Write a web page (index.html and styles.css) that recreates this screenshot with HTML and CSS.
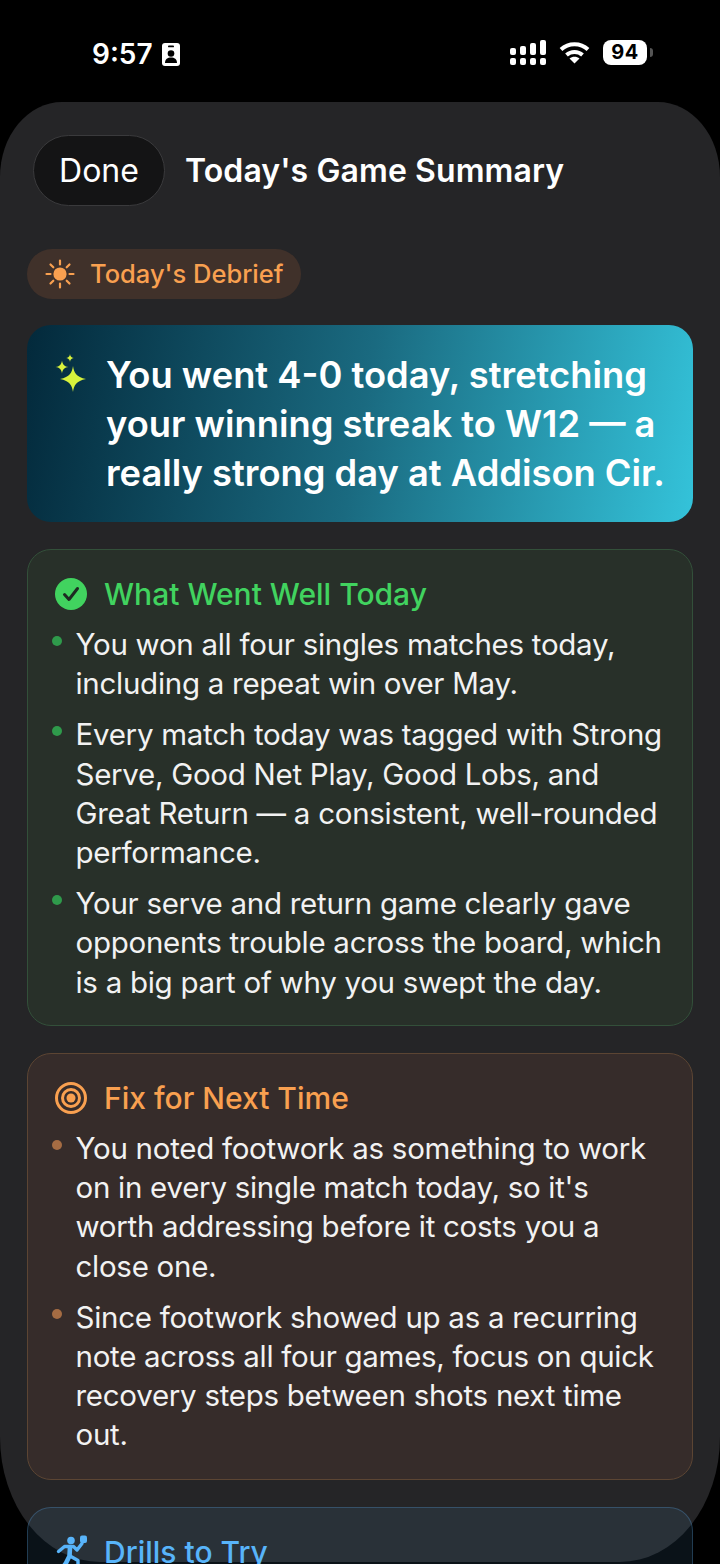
FILE: index.html
```html
<!DOCTYPE html>
<html lang="en">
<head>
    <meta charset="UTF-8">
    <meta name="viewport" content="width=device-width, initial-scale=1.0">
    <title>Today's Game Summary</title>
    <link rel="stylesheet" href="styles.css">
</head>
<body>
    <div class="status-bar">
        <div class="status-left">
            <span class="clock">9:57</span>
            <svg width="18" height="23" viewBox="0 0 18 23">
                <rect x="0" y="0" width="18" height="23" rx="3" fill="#fff"/>
                <rect x="6" y="2.500" width="6" height="1.800" rx="0.900" fill="#000"/>
                <circle cx="9" cy="10.500" r="3.300" fill="#000"/>
                <path d="M3 20c0-4 2.600-5.600 6-5.600s6 1.600 6 5.600z" fill="#000"/>
            </svg>
        </div>
        <div class="status-right">
            <svg width="36" height="25" viewBox="0 0 36 25" fill="#fff">
                <rect x="0" y="8" width="6" height="7" rx="2"/>
                <rect x="10" y="6" width="6" height="9" rx="2"/>
                <rect x="20" y="3" width="6" height="12" rx="2"/>
                <rect x="30" y="0" width="6" height="15" rx="2"/>
                <rect x="0" y="18" width="6" height="7" rx="2"/>
                <rect x="10" y="18" width="6" height="7" rx="2"/>
                <rect x="20" y="18" width="6" height="7" rx="2"/>
                <rect x="30" y="18" width="6" height="7" rx="2"/>
            </svg>
            <svg width="31" height="23" viewBox="0 0 31 23" fill="none" stroke="#fff" stroke-width="4">
                <path d="M2 8.500c7.500-7 19.500-7 27 0"/>
                <path d="M7.500 14c4.500-4 11.500-4 16 0"/>
                <path d="M15.500 22.500l-5-5c2.800-2.400 7.200-2.400 10 0z" fill="#fff" stroke="none"/>
            </svg>
            <div class="battery">
                <span class="battery-body">94</span>
                <span class="battery-cap"></span>
            </div>
        </div>
    </div>

    <div class="sheet">
        <div class="sheet-head">
            <div class="done-btn">Done</div>
            <h1>Today's Game Summary</h1>
        </div>

        <div class="debrief-pill">
            <svg width="32" height="32" viewBox="0 0 32 32" fill="#f9a050" stroke="#f9a050" stroke-width="2.200" stroke-linecap="round">
                <circle cx="16" cy="16" r="6.600" stroke="none"/>
                <path d="M16 2.500v4M16 25.500v4M2.500 16h4M25.500 16h4M6.500 6.500l2.800 2.800M22.700 22.700l2.800 2.800M6.500 25.500l2.800-2.800M22.700 9.300l2.800-2.800"/>
            </svg>
            <span>Today's Debrief</span>
        </div>

        <div class="hero-card">
            <svg class="sparkles" width="32" height="40" viewBox="0 0 32 40" fill="#d8f23c">
                <path d="M18 12c.9 6.400 3.200 11.100 13 13-9.800 1.900-12.100 6.600-13 13-.9-6.400-3.200-11.100-13-13 9.800-1.900 12.100-6.600 13-13z"/>
                <path d="M7 6.500c.5 3.200 1.600 5.800 6.500 6.500-4.900.7-6 3.300-6.500 6.500-.5-3.200-1.600-5.800-6.500-6.500C5.400 12.300 6.500 9.700 7 6.500z"/>
                <path d="M15 0c.3 2 1 3.400 3.700 4-2.700.6-3.400 2-3.700 4-.3-2-1-3.400-3.700-4 2.700-.6 3.400-2 3.700-4z"/>
            </svg>
            <p>You went 4-0 today, stretching your winning streak to W12 — a really strong day at Addison Cir.</p>
        </div>

        <div class="card card-green">
            <div class="card-title">
                <svg width="32" height="32" viewBox="0 0 32 32">
                    <circle cx="16" cy="16" r="16" fill="#41d35f"/>
                    <path d="M9.500 16.500l4.500 5 8.500-11" fill="none" stroke="#1d2b22" stroke-width="3" stroke-linecap="round" stroke-linejoin="round"/>
                </svg>
                <h2>What Went Well Today</h2>
            </div>
            <ul>
                <li>You won all four singles matches today, including a repeat win over May.</li>
                <li>Every match today was tagged with Strong Serve, Good Net Play, Good Lobs, and Great Return — a consistent, well-rounded performance.</li>
                <li>Your serve and return game clearly gave opponents trouble across the board, which is a big part of why you swept the day.</li>
            </ul>
        </div>

        <div class="card card-orange">
            <div class="card-title">
                <svg width="32" height="32" viewBox="0 0 32 32" fill="none" stroke="#f9a050" stroke-width="3">
                    <circle cx="16" cy="16" r="14.500"/>
                    <circle cx="16" cy="16" r="8.500"/>
                    <circle cx="16" cy="16" r="4.500" fill="#f9a050" stroke="none"/>
                </svg>
                <h2>Fix for Next Time</h2>
            </div>
            <ul>
                <li>You noted footwork as something to work on in every single match today, so it's worth addressing before it costs you a close one.</li>
                <li>Since footwork showed up as a recurring note across all four games, focus on quick recovery steps between shots next time out.</li>
            </ul>
        </div>

        <div class="card card-blue">
            <div class="card-title">
                <svg width="32" height="34" viewBox="0 0 32 34" fill="none" stroke="#58b4fa" stroke-width="3.400" stroke-linecap="round" stroke-linejoin="round">
                    <circle cx="16" cy="5.500" r="3.800" fill="#58b4fa" stroke="none"/>
                    <rect x="25" y="0.500" width="7" height="7.500" rx="2" fill="#58b4fa" stroke="none"/>
                    <path d="M3.500 16.500l6-5h9l3.500 3.500 5-6.500"/>
                    <path d="M15 12l-.5 9-3.500 7-3.500 5" stroke-width="4.600"/>
                    <path d="M15 21l8 4.500v8"/>
                </svg>
                <h2>Drills to Try</h2>
            </div>
        </div>
    </div>
</body>
</html>
```

FILE: styles.css
```css
* {
    box-sizing: border-box;
}

html, body {
    height: 1564px;
    overflow: hidden;
}

body {
    margin: 0;
    background-color: #000;
    color: #fff;
    font-family: Inter, "Liberation Sans", sans-serif;
}

.status-bar {
    height: 102px;
    padding: 40px 67px 0 92px;
    display: flex;
    justify-content: space-between;
    align-items: flex-start;
}

.status-left {
    display: flex;
    align-items: center;
    gap: 9px;
    padding-top: 3px;
}

.clock {
    font-size: 28px;
    font-weight: 600;
    line-height: 23px;
}

.status-right {
    display: flex;
    align-items: center;
    gap: 13px;
}

.battery {
    display: flex;
    align-items: center;
    gap: 3px;
}

.battery-body {
    width: 44px;
    height: 25px;
    border-radius: 8px;
    background-color: #fff;
    color: #000;
    font-size: 20px;
    font-weight: 700;
    letter-spacing: 0.5px;
    line-height: 25px;
    text-align: center;
}

.battery-cap {
    width: 3px;
    height: 9px;
    border-radius: 0 3px 3px 0;
    background-color: #555;
}

.sheet {
    height: 1460px;
    padding: 33px 27px 0;
    background-color: #252527;
    border-radius: 62px 62px 100px 100px / 75px 75px 125px 125px;
}

.sheet-head {
    display: flex;
    align-items: center;
    gap: 20px;
    padding-left: 6px;
}

.done-btn {
    width: 132px;
    height: 71px;
    border: 1px solid #3a3a3c;
    border-radius: 36px;
    background-color: #141415;
    font-size: 32px;
    line-height: 69px;
    text-align: center;
}

h1 {
    margin: 0;
    font-size: 32px;
    font-weight: 600;
    letter-spacing: 0.1px;
}

.debrief-pill {
    width: 274px;
    height: 50px;
    margin-top: 43px;
    padding: 0 0 1px 17px;
    display: flex;
    align-items: center;
    gap: 14px;
    border-radius: 25px;
    background-color: #40312a;
    color: #f9a050;
    font-size: 25.500px;
    font-weight: 500;
}

.hero-card {
    height: 197px;
    margin-top: 26px;
    padding: 26px 20px 0 28px;
    display: flex;
    gap: 19px;
    border-radius: 24px;
    background: linear-gradient(100deg, #03293b 0%, #1a6a80 50%, #34c3da 100%);
}

.sparkles {
    flex-shrink: 0;
    margin-top: 3px;
}

.hero-card p {
    margin: 0;
    font-size: 36.300px;
    font-weight: 600;
    line-height: 49px;
}

.card {
    margin-top: 27px;
    padding: 27px 20px 0 26.500px;
    border: 1.5px solid;
    border-radius: 24px;
}

.card-green {
    height: 477px;
    background-color: #283029;
    border-color: #33503a;
}

.card-orange {
    height: 426.500px;
    background-color: #362c2a;
    border-color: #5c4533;
}

.card-blue {
    height: 300px;
    margin-top: 27.500px;
    background-color: rgba(62, 112, 150, 0.16);
    border-color: rgba(90, 160, 220, 0.3);
}

.card-title {
    display: flex;
    align-items: center;
    gap: 17.500px;
    height: 34px;
}

h2 {
    margin: 0;
    font-size: 30px;
    font-weight: 500;
}

.card-green h2 {
    color: #41d35f;
}

.card-orange h2 {
    color: #f9a050;
}

.card-blue h2 {
    color: #58b4fa;
}

ul {
    list-style: none;
    margin: 14px 0 0;
    padding: 0;
}

li {
    position: relative;
    margin-bottom: 12px;
    padding-left: 21px;
    font-size: 29.500px;
    letter-spacing: -0.28px;
    line-height: 39.200px;
    color: #f2f2f2;
}

li::before {
    content: "";
    position: absolute;
    left: -3px;
    top: 11px;
    width: 10px;
    height: 10px;
    border-radius: 50%;
}

.card-green li::before {
    background-color: #2f9a4b;
}

.card-orange li::before {
    background-color: #a56c43;
}
```
